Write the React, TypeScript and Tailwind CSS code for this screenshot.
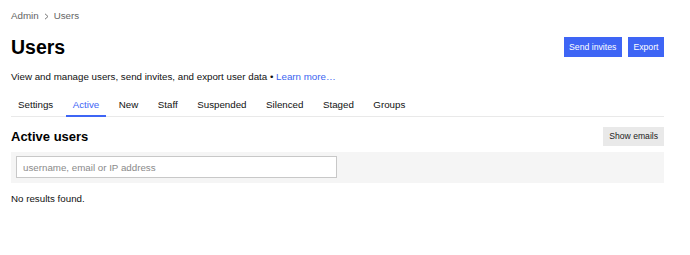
import { useState } from 'react'

const tabs = ['Settings', 'Active', 'New', 'Staff', 'Suspended', 'Silenced', 'Staged', 'Groups']

export default function App() {
  const [active, setActive] = useState('Active')
  const [query, setQuery] = useState('')

  return (
    <div className="min-h-[255px] bg-white text-[#111] font-['Liberation_Sans',Arial,sans-serif] text-[9.75px]">
      <div className="w-[653px] ml-[11px] pt-[9px]">
        {/* breadcrumb */}
        <nav className="flex items-center h-[14px] leading-[14px] text-[#646464]">
          <span>Admin</span>
          <svg className="mx-[5px] w-[5px] h-[7px]" viewBox="0 0 5 7" fill="none">
            <polyline points="1,0.8 4,3.5 1,6.2" stroke="#777" strokeWidth="1" />
          </svg>
          <span>Users</span>
        </nav>

        {/* title row */}
        <div className="flex items-center justify-between mt-[14px] h-[20px]">
          <h1 className="text-[19.5px] leading-[20px] font-bold text-black">Users</h1>
          <div className="flex gap-[6px]">
            <button className="h-[20px] px-[5.5px] bg-[#3e65f5] text-white text-[8.7px] leading-[20px]">
              Send invites
            </button>
            <button className="h-[20px] px-[5.5px] bg-[#3e65f5] text-white text-[8.7px] leading-[20px]">
              Export
            </button>
          </div>
        </div>

        <p className="mt-[13px] leading-[14px]">
          View and manage users, send invites, and export user data •{' '}
          <a href="#" className="text-[#3b64f0]">Learn more…</a>
        </p>

        {/* tabs */}
        <ul className="flex gap-[5.5px] mt-[10px] border-b border-[#e9e9e9]">
          {tabs.map((t) => (
            <li
              key={t}
              onClick={() => setActive(t)}
              className={
                t === active
                  ? 'px-[7px] pt-[4px] pb-[3px] leading-[14px] -mb-px border-b-2 border-[#3e65f5] text-[#3e65f5] cursor-pointer'
                  : 'px-[7px] pt-[4px] pb-[3px] leading-[14px] -mb-px border-b-2 border-transparent cursor-pointer'
              }
            >
              {t}
            </li>
          ))}
        </ul>

        <div className="flex items-center justify-between mt-[10px] h-[19px]">
          <h2 className="text-[13px] leading-[16px] font-bold text-black">Active users</h2>
          <button className="h-[19px] px-[6px] bg-[#e9e9e9] text-[#222] text-[8.6px] leading-[19px]">
            Show emails
          </button>
        </div>

        <div className="mt-[6px] bg-[#f5f5f5] pt-[4px] pb-[5px] pl-[5px]">
          <input
            value={query}
            onChange={(e) => setQuery(e.target.value)}
            placeholder="username, email or IP address"
            className="block w-[321px] h-[22px] px-[6px] bg-white border border-[#c8c8c8] text-[9.75px] placeholder:text-[#8a8a8a] outline-none"
          />
        </div>

        <p className="mt-[9px] leading-[14px]">No results found.</p>
      </div>
    </div>
  )
}
